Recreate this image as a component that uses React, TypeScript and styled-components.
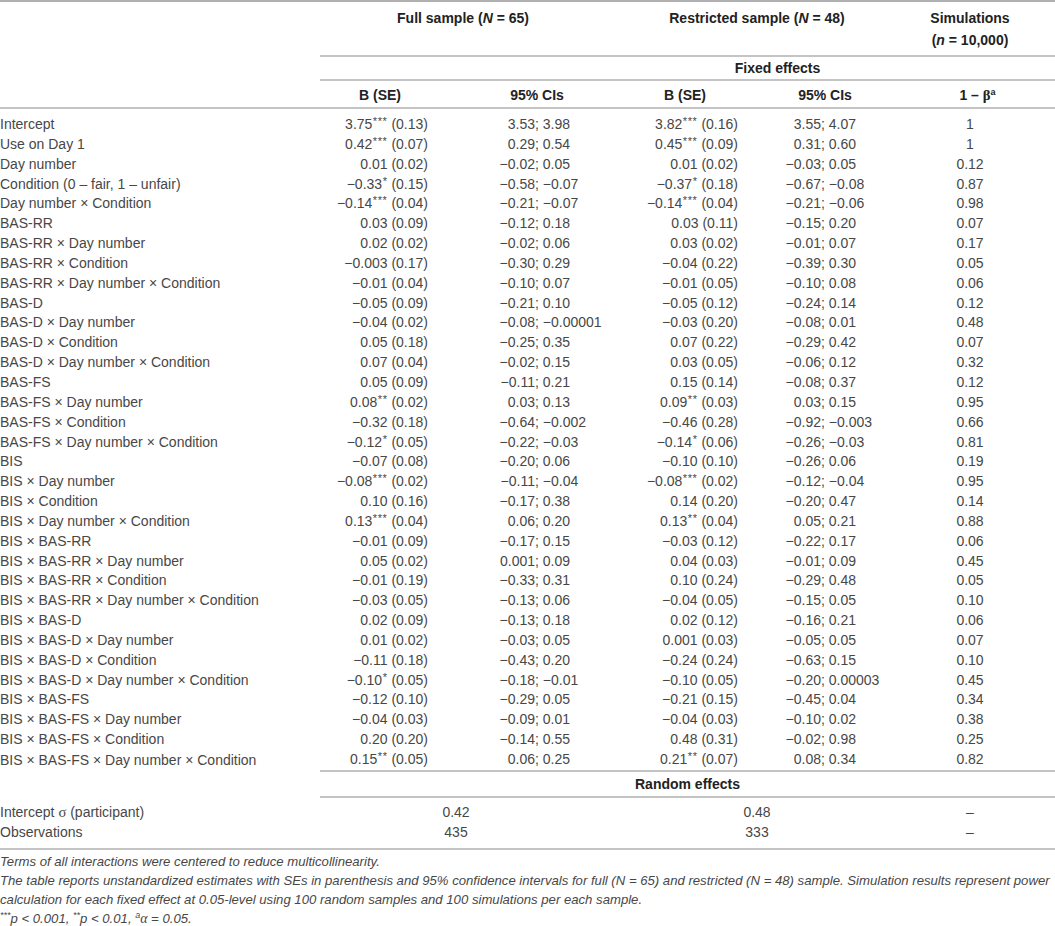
import React from "react";
import styled, { createGlobalStyle } from "styled-components";

const GlobalStyle = createGlobalStyle`
  html, body { margin: 0; padding: 0; background: #ffffff; }
  body {
    font-family: "Liberation Sans", Arial, Helvetica, sans-serif;
    color: #474747;
  }
`;

type Row = { label: string; b1: string; ci1: [string, string]; b2: string; ci2: [string, string]; sim: string };

const rows: Row[] = [
  { label: "Intercept", b1: "3.75*** (0.13)", ci1: ["3.53", "3.98"], b2: "3.82*** (0.16)", ci2: ["3.55", "4.07"], sim: "1" },
  { label: "Use on Day 1", b1: "0.42*** (0.07)", ci1: ["0.29", "0.54"], b2: "0.45*** (0.09)", ci2: ["0.31", "0.60"], sim: "1" },
  { label: "Day number", b1: "0.01 (0.02)", ci1: ["−0.02", "0.05"], b2: "0.01 (0.02)", ci2: ["−0.03", "0.05"], sim: "0.12" },
  { label: "Condition (0 – fair, 1 – unfair)", b1: "−0.33* (0.15)", ci1: ["−0.58", "−0.07"], b2: "−0.37* (0.18)", ci2: ["−0.67", "−0.08"], sim: "0.87" },
  { label: "Day number × Condition", b1: "−0.14*** (0.04)", ci1: ["−0.21", "−0.07"], b2: "−0.14*** (0.04)", ci2: ["−0.21", "−0.06"], sim: "0.98" },
  { label: "BAS-RR", b1: "0.03 (0.09)", ci1: ["−0.12", "0.18"], b2: "0.03 (0.11)", ci2: ["−0.15", "0.20"], sim: "0.07" },
  { label: "BAS-RR × Day number", b1: "0.02 (0.02)", ci1: ["−0.02", "0.06"], b2: "0.03 (0.02)", ci2: ["−0.01", "0.07"], sim: "0.17" },
  { label: "BAS-RR × Condition", b1: "−0.003 (0.17)", ci1: ["−0.30", "0.29"], b2: "−0.04 (0.22)", ci2: ["−0.39", "0.30"], sim: "0.05" },
  { label: "BAS-RR × Day number × Condition", b1: "−0.01 (0.04)", ci1: ["−0.10", "0.07"], b2: "−0.01 (0.05)", ci2: ["−0.10", "0.08"], sim: "0.06" },
  { label: "BAS-D", b1: "−0.05 (0.09)", ci1: ["−0.21", "0.10"], b2: "−0.05 (0.12)", ci2: ["−0.24", "0.14"], sim: "0.12" },
  { label: "BAS-D × Day number", b1: "−0.04 (0.02)", ci1: ["−0.08", "−0.00001"], b2: "−0.03 (0.20)", ci2: ["−0.08", "0.01"], sim: "0.48" },
  { label: "BAS-D × Condition", b1: "0.05 (0.18)", ci1: ["−0.25", "0.35"], b2: "0.07 (0.22)", ci2: ["−0.29", "0.42"], sim: "0.07" },
  { label: "BAS-D × Day number × Condition", b1: "0.07 (0.04)", ci1: ["−0.02", "0.15"], b2: "0.03 (0.05)", ci2: ["−0.06", "0.12"], sim: "0.32" },
  { label: "BAS-FS", b1: "0.05 (0.09)", ci1: ["−0.11", "0.21"], b2: "0.15 (0.14)", ci2: ["−0.08", "0.37"], sim: "0.12" },
  { label: "BAS-FS × Day number", b1: "0.08** (0.02)", ci1: ["0.03", "0.13"], b2: "0.09** (0.03)", ci2: ["0.03", "0.15"], sim: "0.95" },
  { label: "BAS-FS × Condition", b1: "−0.32 (0.18)", ci1: ["−0.64", "−0.002"], b2: "−0.46 (0.28)", ci2: ["−0.92", "−0.003"], sim: "0.66" },
  { label: "BAS-FS × Day number × Condition", b1: "−0.12* (0.05)", ci1: ["−0.22", "−0.03"], b2: "−0.14* (0.06)", ci2: ["−0.26", "−0.03"], sim: "0.81" },
  { label: "BIS", b1: "−0.07 (0.08)", ci1: ["−0.20", "0.06"], b2: "−0.10 (0.10)", ci2: ["−0.26", "0.06"], sim: "0.19" },
  { label: "BIS × Day number", b1: "−0.08*** (0.02)", ci1: ["−0.11", "−0.04"], b2: "−0.08*** (0.02)", ci2: ["−0.12", "−0.04"], sim: "0.95" },
  { label: "BIS × Condition", b1: "0.10 (0.16)", ci1: ["−0.17", "0.38"], b2: "0.14 (0.20)", ci2: ["−0.20", "0.47"], sim: "0.14" },
  { label: "BIS × Day number × Condition", b1: "0.13*** (0.04)", ci1: ["0.06", "0.20"], b2: "0.13** (0.04)", ci2: ["0.05", "0.21"], sim: "0.88" },
  { label: "BIS × BAS-RR", b1: "−0.01 (0.09)", ci1: ["−0.17", "0.15"], b2: "−0.03 (0.12)", ci2: ["−0.22", "0.17"], sim: "0.06" },
  { label: "BIS × BAS-RR × Day number", b1: "0.05 (0.02)", ci1: ["0.001", "0.09"], b2: "0.04 (0.03)", ci2: ["−0.01", "0.09"], sim: "0.45" },
  { label: "BIS × BAS-RR × Condition", b1: "−0.01 (0.19)", ci1: ["−0.33", "0.31"], b2: "0.10 (0.24)", ci2: ["−0.29", "0.48"], sim: "0.05" },
  { label: "BIS × BAS-RR × Day number × Condition", b1: "−0.03 (0.05)", ci1: ["−0.13", "0.06"], b2: "−0.04 (0.05)", ci2: ["−0.15", "0.05"], sim: "0.10" },
  { label: "BIS × BAS-D", b1: "0.02 (0.09)", ci1: ["−0.13", "0.18"], b2: "0.02 (0.12)", ci2: ["−0.16", "0.21"], sim: "0.06" },
  { label: "BIS × BAS-D × Day number", b1: "0.01 (0.02)", ci1: ["−0.03", "0.05"], b2: "0.001 (0.03)", ci2: ["−0.05", "0.05"], sim: "0.07" },
  { label: "BIS × BAS-D × Condition", b1: "−0.11 (0.18)", ci1: ["−0.43", "0.20"], b2: "−0.24 (0.24)", ci2: ["−0.63", "0.15"], sim: "0.10" },
  { label: "BIS × BAS-D × Day number × Condition", b1: "−0.10* (0.05)", ci1: ["−0.18", "−0.01"], b2: "−0.10 (0.05)", ci2: ["−0.20", "0.00003"], sim: "0.45" },
  { label: "BIS × BAS-FS", b1: "−0.12 (0.10)", ci1: ["−0.29", "0.05"], b2: "−0.21 (0.15)", ci2: ["−0.45", "0.04"], sim: "0.34" },
  { label: "BIS × BAS-FS × Day number", b1: "−0.04 (0.03)", ci1: ["−0.09", "0.01"], b2: "−0.04 (0.03)", ci2: ["−0.10", "0.02"], sim: "0.38" },
  { label: "BIS × BAS-FS × Condition", b1: "0.20 (0.20)", ci1: ["−0.14", "0.55"], b2: "0.48 (0.31)", ci2: ["−0.02", "0.98"], sim: "0.25" },
  { label: "BIS × BAS-FS × Day number × Condition", b1: "0.15** (0.05)", ci1: ["0.06", "0.25"], b2: "0.21** (0.07)", ci2: ["0.08", "0.34"], sim: "0.82" },
];

const RULE = "#c4c4c4";

const Page = styled.div`
  width: 1055px;
`;

const Table = styled.table`
  width: 1055px;
  table-layout: fixed;
  border-collapse: separate;
  border-spacing: 0;
  border-top: 2px solid #b0b0b0;
  font-size: 14px;
`;

const Col = styled.col<{ $w: number }>`
  width: ${(p) => p.$w}px;
`;

const Corner = styled.th`
  border-bottom: 2px solid ${RULE};
  padding: 0;
`;

const GroupHead = styled.th<{ $pr?: number }>`
  vertical-align: top;
  padding: 5px ${(p) => p.$pr ?? 0}px 4px 0;
  line-height: 22px;
  font-weight: 700;
  color: #222222;
  text-align: center;
  border-bottom: 2px solid ${RULE};
`;

const SectionHead = styled.th<{ $pl?: number }>`
  padding: 0 0 0 ${(p) => p.$pl ?? 0}px;
  line-height: 22px;
  font-weight: 700;
  color: #222222;
  text-align: center;
  border-bottom: 2px solid ${RULE};
`;

const ColHead = styled.th<{ $pl?: number }>`
  padding: 3px 0 1px ${(p) => p.$pl ?? 0}px;
  line-height: 22px;
  font-weight: 700;
  color: #222222;
  text-align: center;
  border-bottom: 2px solid ${RULE};
  white-space: nowrap;
`;

const DataRow = styled.tr<{ $first?: boolean; $last?: boolean }>`
  & > td {
    padding-top: ${(p) => (p.$first ? 6 : 0)}px;
  }
  & > td + td {
    border-bottom: ${(p) => (p.$last ? `2px solid ${RULE}` : "none")};
  }
`;

const Cell = styled.td<{ $align?: "left" | "right" | "center"; $pl?: number; $pr?: number }>`
  line-height: 19.84px;
  padding-left: ${(p) => p.$pl ?? 0}px;
  padding-right: ${(p) => p.$pr ?? 0}px;
  padding-bottom: 0;
  text-align: ${(p) => p.$align ?? "left"};
  white-space: nowrap;
  color: #474747;
`;

const RandomRow = styled.tr<{ $first?: boolean; $last?: boolean }>`
  & > td {
    line-height: 20px;
    padding-top: ${(p) => (p.$first ? 4 : 0)}px;
    padding-bottom: ${(p) => (p.$last ? 6 : 0)}px;
    border-bottom: ${(p) => (p.$last ? `2px solid ${RULE}` : "none")};
  }
`;

const Stars = styled.sup`
  font-size: 11px;
  line-height: 0;
  vertical-align: 4px;
  letter-spacing: 0.6px;
  margin-left: 0.5px;
`;

const Lead = styled.span`
  display: inline-block;
  width: 40px;
  text-align: right;
`;

const Greek = styled.span`
  font-family: "Liberation Serif", "Times New Roman", serif;
  font-size: 1.05em;
  line-height: 0;
`;

const SupA = styled.sup`
  font-size: 9px;
  line-height: 0;
  vertical-align: 5px;
`;

const Italic = styled.i``;

const Notes = styled.div`
  padding-top: 2px;
  font-size: 13.15px;
  font-style: italic;
  line-height: 19.2px;
  color: #474747;
`;

const NoteLine = styled.div`
  white-space: nowrap;
`;

function Estimate({ text }: { text: string }) {
  const m = text.match(/^(.+?)(\**) \((.+)\)$/);
  if (!m) return <>{text}</>;
  return (
    <>
      {m[1]}
      {m[2] && <Stars>{m[2]}</Stars>} ({m[3]})
    </>
  );
}

function Interval({ v }: { v: [string, string] }) {
  return (
    <>
      <Lead>{v[0]}</Lead>; {v[1]}
    </>
  );
}

export default function App() {
  return (
    <Page>
      <GlobalStyle />
      <Table>
        <colgroup>
          <Col $w={320} />
          <Col $w={120} />
          <Col $w={180} />
          <Col $w={130} />
          <Col $w={150} />
          <Col $w={155} />
        </colgroup>
        <thead>
          <tr>
            <Corner rowSpan={3} />
            <GroupHead colSpan={2} $pr={14}>
              Full sample (<Italic>N</Italic> = 65)
            </GroupHead>
            <GroupHead colSpan={2} $pr={6}>
              Restricted sample (<Italic>N</Italic> = 48)
            </GroupHead>
            <GroupHead $pr={15}>
              Simulations
              <br />(<Italic>n</Italic> = 10,000)
            </GroupHead>
          </tr>
          <tr>
            <SectionHead colSpan={5} $pl={180}>
              Fixed effects
            </SectionHead>
          </tr>
          <tr>
            <ColHead>B (SE)</ColHead>
            <ColHead $pl={14}>95% CIs</ColHead>
            <ColHead>B (SE)</ColHead>
            <ColHead>95% CIs</ColHead>
            <ColHead>
              1 – <Greek>β</Greek>
              <SupA>a</SupA>
            </ColHead>
          </tr>
        </thead>
        <tbody>
          {rows.map((r, i) => (
            <DataRow key={r.label} $first={i === 0} $last={i === rows.length - 1}>
              <Cell>{r.label}</Cell>
              <Cell $align="right" $pr={12}>
                <Estimate text={r.b1} />
              </Cell>
              <Cell $pl={55}>
                <Interval v={r.ci1} />
              </Cell>
              <Cell $align="right" $pr={12}>
                <Estimate text={r.b2} />
              </Cell>
              <Cell $pl={31}>
                <Interval v={r.ci2} />
              </Cell>
              <Cell $align="center" $pr={15}>
                {r.sim}
              </Cell>
            </DataRow>
          ))}
          <tr>
            <Cell />
            <SectionHead colSpan={5} $pl={-16}>
              Random effects
            </SectionHead>
          </tr>
          <RandomRow $first>
            <Cell>
              Intercept <Greek>σ</Greek> (participant)
            </Cell>
            <Cell colSpan={2} $align="center" $pr={28}>
              0.42
            </Cell>
            <Cell colSpan={2} $align="center" $pr={6}>
              0.48
            </Cell>
            <Cell $align="center" $pr={15}>
              –
            </Cell>
          </RandomRow>
          <RandomRow $last>
            <Cell>Observations</Cell>
            <Cell colSpan={2} $align="center" $pr={28}>
              435
            </Cell>
            <Cell colSpan={2} $align="center" $pr={6}>
              333
            </Cell>
            <Cell $align="center" $pr={15}>
              –
            </Cell>
          </RandomRow>
        </tbody>
      </Table>
      <Notes>
        <NoteLine>Terms of all interactions were centered to reduce multicollinearity.</NoteLine>
        <NoteLine>
          The table reports unstandardized estimates with SEs in parenthesis and 95% confidence intervals for full (N = 65) and
          restricted (N = 48) sample. Simulation results represent power
        </NoteLine>
        <NoteLine>calculation for each fixed effect at 0.05-level using 100 random samples and 100 simulations per each sample.</NoteLine>
        <NoteLine>
          <SupA>***</SupA>p &lt; 0.001, <SupA>**</SupA>p &lt; 0.01, <SupA>a</SupA>
          <Greek>α</Greek> = 0.05.
        </NoteLine>
      </Notes>
    </Page>
  );
}
